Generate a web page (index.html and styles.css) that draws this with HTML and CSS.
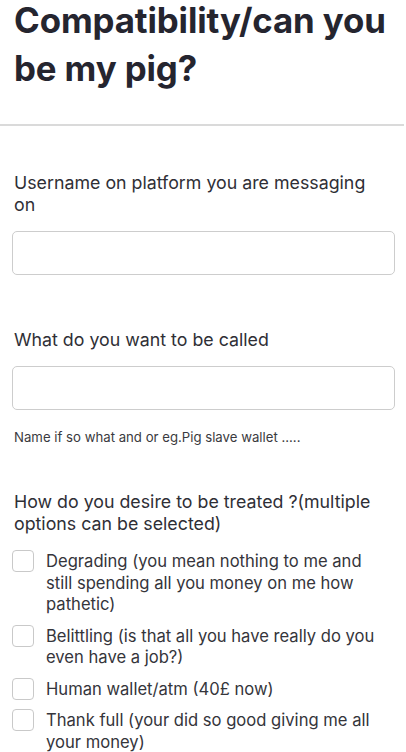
FILE: index.html
```html
<!DOCTYPE html>
<html>
<head>
<meta charset="utf-8">
<link rel="stylesheet" href="styles.css">
</head>
<body>
<header class="head">
  <h1 class="title">Compatibility/can you be my pig?</h1>
</header>
<main class="form">
  <div class="field">
    <label class="label">Username on platform you are messaging on</label>
    <div class="input"></div>
  </div>
  <div class="field field-help">
    <label class="label">What do you want to be called</label>
    <div class="input"></div>
    <p class="help">Name if so what and or eg.Pig slave wallet .....</p>
  </div>
  <div class="field">
    <label class="label">How do you desire to be treated ?(multiple options can be selected)</label>
    <ul class="options">
      <li class="option"><span class="box"></span><span class="opt-text">Degrading (you mean nothing to me and still spending all you money on me how pathetic)</span></li>
      <li class="option"><span class="box"></span><span class="opt-text">Belittling (is that all you have really do you even have a job?)</span></li>
      <li class="option"><span class="box"></span><span class="opt-text">Human wallet/atm (40£ now)</span></li>
      <li class="option"><span class="box"></span><span class="opt-text">Thank full (your did so good giving me all your money)</span></li>
    </ul>
  </div>
</main>
</body>
</html>
```
FILE: styles.css
```css
* { box-sizing: border-box; }
html, body { margin: 0; padding: 0; background: #fff; }
body {
  font-family: Inter, "Noto Sans", sans-serif;
  color: #2b2b33;
  width: 406px;
  overflow: hidden;
}
.head {
  display: flow-root;
  padding: 0 14px;
  border-bottom: 2px solid #dadada;
  height: 126px;
  width: 404px;
}
.title {
  margin: -4px 0 0 0;
  font-size: 34.8px;
  line-height: 48px;
  font-weight: 700;
  color: #25252f;
  letter-spacing: -0.1px;
}
.form {
  padding: 46px 12px 0 12px;
}
.field { margin-bottom: 54px; }
.field-help { margin-bottom: 44px; }
.label {
  display: block;
  padding: 0 20px 0 2px;
  font-size: 17.8px;
  line-height: 22px;
  color: #2f2f36;
  margin-bottom: 15px;
}
.input {
  height: 44px;
  border: 1px solid #cdcdcd;
  border-radius: 5px;
  width: 383px;
}
.help {
  margin: 17px 0 0 2px;
  font-size: 13.2px;
  line-height: 20px;
  color: #3a3a40;
}
.options { list-style: none; margin: 0; padding: 0; }
.option {
  display: flex;
  gap: 12px;
  align-items: flex-start;
  padding-right: 10px;
  margin-bottom: 9px;
}
.box {
  flex: none;
  width: 22px;
  height: 22px;
  border: 1px solid #c9c9c9;
  border-radius: 4px;
  margin-top: 0;
}
.opt-text {
  font-size: 16.6px;
  line-height: 21.5px;
  color: #35353b;
  padding-top: 1px;
}
```
